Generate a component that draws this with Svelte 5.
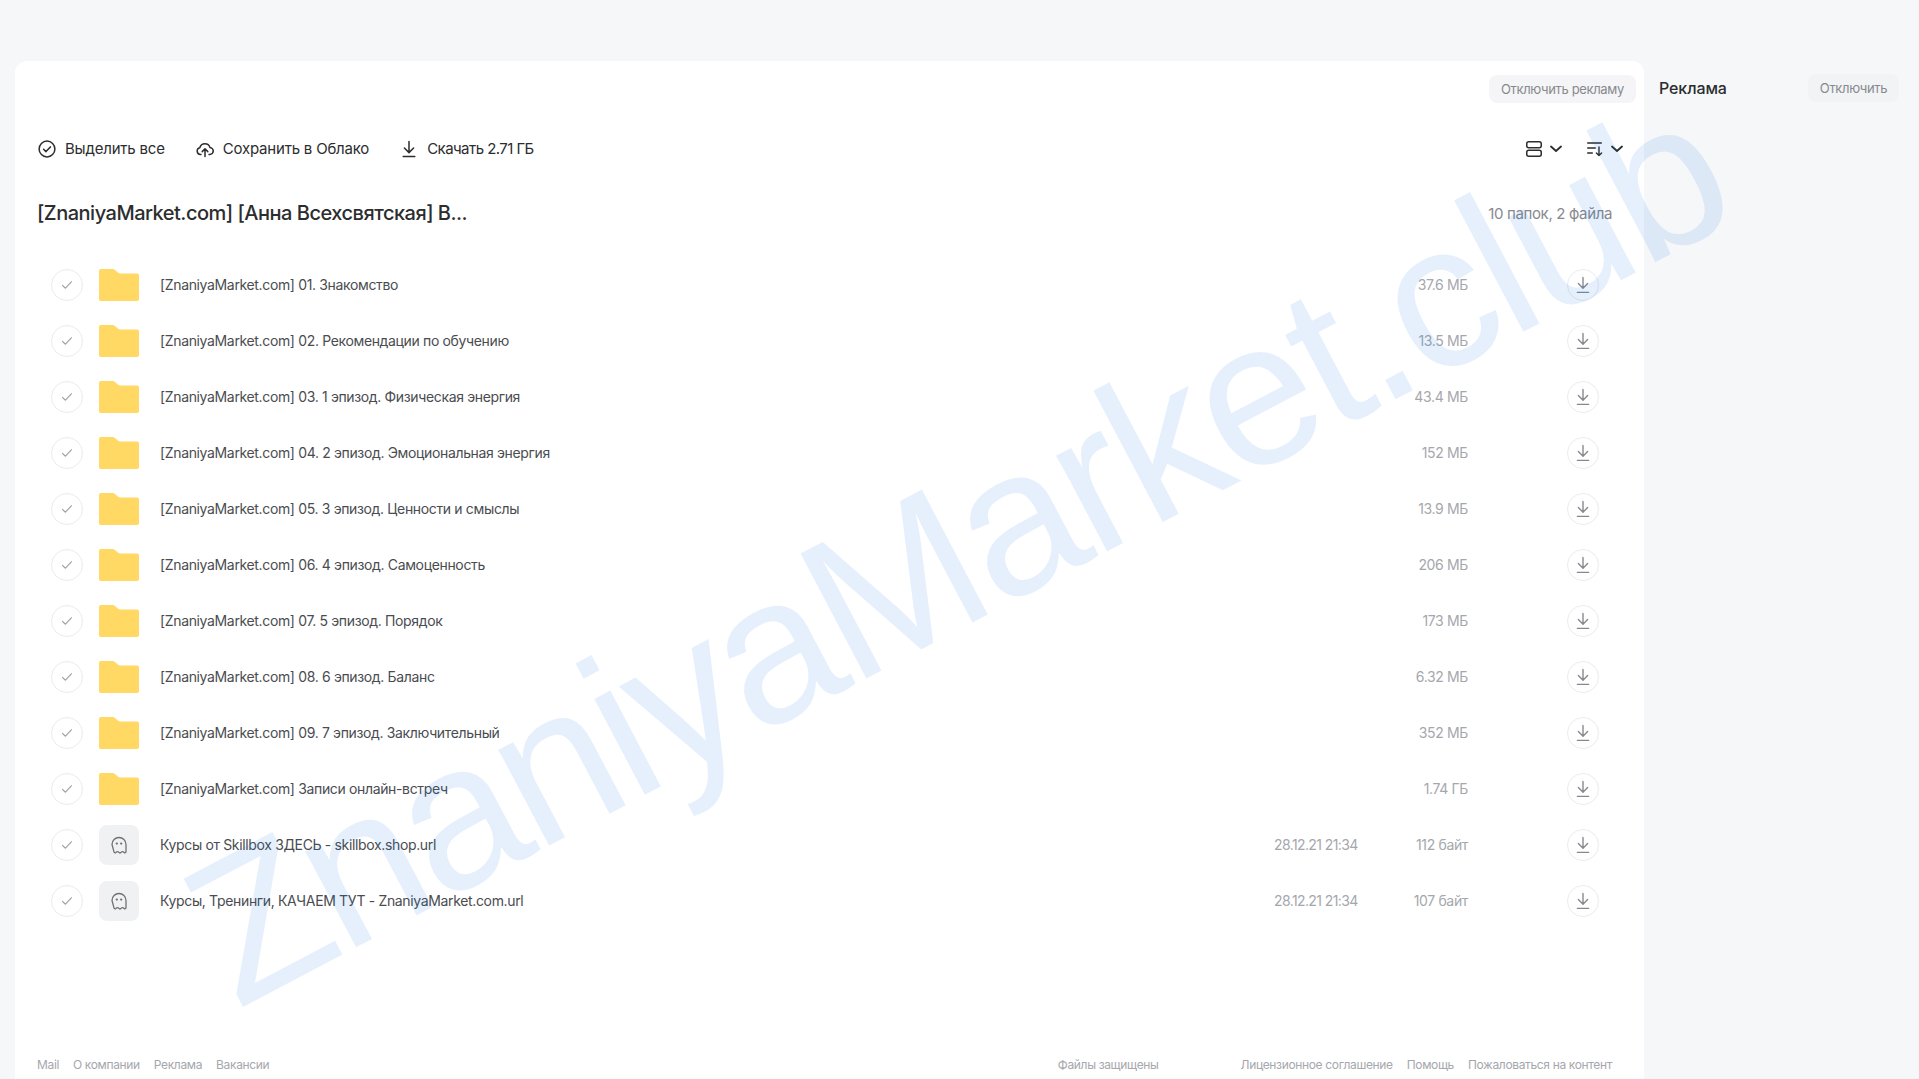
<script lang="ts">
	// Содержимое папки
	const items = [
		{ name: '[ZnaniyaMarket.com] 01. Знакомство', size: '37.6 МБ', type: 'folder' },
		{ name: '[ZnaniyaMarket.com] 02. Рекомендации по обучению', size: '13.5 МБ', type: 'folder' },
		{ name: '[ZnaniyaMarket.com] 03. 1 эпизод. Физическая энергия', size: '43.4 МБ', type: 'folder' },
		{ name: '[ZnaniyaMarket.com] 04. 2 эпизод. Эмоциональная энергия', size: '152 МБ', type: 'folder' },
		{ name: '[ZnaniyaMarket.com] 05. 3 эпизод. Ценности и смыслы', size: '13.9 МБ', type: 'folder' },
		{ name: '[ZnaniyaMarket.com] 06. 4 эпизод. Самоценность', size: '206 МБ', type: 'folder' },
		{ name: '[ZnaniyaMarket.com] 07. 5 эпизод. Порядок', size: '173 МБ', type: 'folder' },
		{ name: '[ZnaniyaMarket.com] 08. 6 эпизод. Баланс', size: '6.32 МБ', type: 'folder' },
		{ name: '[ZnaniyaMarket.com] 09. 7 эпизод. Заключительный', size: '352 МБ', type: 'folder' },
		{ name: '[ZnaniyaMarket.com] Записи онлайн-встреч', size: '1.74 ГБ', type: 'folder' },
		{ name: 'Курсы от Skillbox ЗДЕСЬ - skillbox.shop.url', size: '112 байт', date: '28.12.21 21:34', type: 'file' },
		{ name: 'Курсы, Тренинги, КАЧАЕМ ТУТ - ZnaniyaMarket.com.url', size: '107 байт', date: '28.12.21 21:34', type: 'file' }
	];
</script>

<div class="page">
	<main class="card">
		<div class="promo">
			<button class="promo-btn">Отключить рекламу</button>
		</div>

		<div class="toolbar">
			<div class="actions">
				<button class="action">
					<svg width="18" height="18" viewBox="0 0 18 18" fill="none" stroke="#2c2d2e" stroke-width="1.5">
						<circle cx="9" cy="9" r="7.9" />
						<path d="M5.6 9.2l2.4 2.4 4.4-4.7" stroke-linecap="round" stroke-linejoin="round" />
					</svg>
					Выделить все
				</button>
				<button class="action">
					<svg width="18" height="18" viewBox="0 0 18 18" fill="none" stroke="#2c2d2e" stroke-width="1.5" stroke-linecap="round" stroke-linejoin="round">
						<path d="M5 14.4H4.4A3.4 3.4 0 0 1 3.8 7.7 5.3 5.3 0 0 1 14 7.6a3.4 3.4 0 0 1-.3 6.8H13" />
						<path d="M9 16.5V9M6.2 11.6 9 8.8l2.8 2.8" />
					</svg>
					Сохранить в Облако
				</button>
				<button class="action narrow">
					<svg width="18" height="18" viewBox="0 0 18 18" fill="none" stroke="#2c2d2e" stroke-width="1.5" stroke-linecap="round" stroke-linejoin="round">
						<path d="M9 1.5v11M4.4 8 9 12.6 13.6 8M3.2 16.6h11.6" />
					</svg>
					Скачать 2.71 ГБ
				</button>
			</div>
			<div class="views">
				<button class="view">
					<svg width="16" height="16" viewBox="0 0 16 16" fill="none" stroke="#2c2d2e" stroke-width="1.5">
						<rect x=".75" y=".75" width="14.5" height="6" rx="2" />
						<rect x=".75" y="9.25" width="14.5" height="6" rx="2" />
					</svg>
					<svg width="12" height="8" viewBox="0 0 12 8" fill="none" stroke="#2c2d2e" stroke-width="1.8" stroke-linecap="round" stroke-linejoin="round">
						<path d="M1 1.5 6 6l5-4.5" />
					</svg>
				</button>
				<button class="view">
					<svg width="16" height="16" viewBox="0 0 16 16" fill="none" stroke="#2c2d2e" stroke-width="1.4" stroke-linecap="round" stroke-linejoin="round">
						<path d="M.7 2h13.6M.7 7h7.6M.7 12h4.6M12 6v8.6M9.4 12l2.6 2.6 2.6-2.6" />
					</svg>
					<svg width="12" height="8" viewBox="0 0 12 8" fill="none" stroke="#2c2d2e" stroke-width="1.8" stroke-linecap="round" stroke-linejoin="round">
						<path d="M1 1.5 6 6l5-4.5" />
					</svg>
				</button>
			</div>
		</div>

		<div class="heading">
			<h1>[ZnaniyaMarket.com] [Анна Всехсвятская] В...</h1>
			<span class="count">10 папок, 2 файла</span>
		</div>

		<ul class="list">
			{#each items as item}
				<li class="row">
					<span class="check">
						<svg width="12" height="10" viewBox="0 0 12 10" fill="none" stroke="#a0a2a6" stroke-width="1.2" stroke-linecap="round" stroke-linejoin="round">
							<path d="M1.5 5.4 4.4 8.2l6-6.4" />
						</svg>
					</span>
					{#if item.type === 'folder'}
						<svg class="thumb" width="40" height="32" viewBox="0 0 40 32">
							<path d="M2 0h11.5c1 0 1.7.3 2.4 1l3 2.6c.6.6 1.3.9 2.2.9H38c1.1 0 2 .9 2 2V30c0 1.1-.9 2-2 2H2c-1.1 0-2-.9-2-2V2C0 .9.9 0 2 0z" fill="#ffd964" />
						</svg>
					{:else}
						<span class="thumb file">
							<svg width="18" height="19" viewBox="0 0 18 19" fill="none" stroke="#6f7176" stroke-width="1.3" stroke-linejoin="round">
								<path d="M2 8.5a7 7 0 0 1 14 0v7.3c0 .9-1 1.3-1.7.8l-1.1-.8c-.4-.3-.9-.3-1.3 0l-1 .8c-.5.4-1.3.4-1.8 0l-1-.8c-.4-.3-.9-.3-1.3 0l-1 .8c-.7.5-1.8.1-1.8-.8z" />
								<circle cx="6.8" cy="7.6" r=".5" fill="#6f7176" />
								<circle cx="11.2" cy="7.6" r=".5" fill="#6f7176" />
							</svg>
						</span>
					{/if}
					<span class="name">{item.name}</span>
					<span class="date">{item.date ?? ''}</span>
					<span class="size">{item.size}</span>
					<button class="download" aria-label="Скачать">
						<svg width="16" height="18" viewBox="0 0 16 18" fill="none" stroke="#87898f" stroke-width="1.4" stroke-linecap="round" stroke-linejoin="round">
							<path d="M8 1.5v10.6M3.4 7.6 8 12.2l4.6-4.6M2.4 16.4h11.2" />
						</svg>
					</button>
				</li>
			{/each}
		</ul>

		<footer class="footer">
			<div class="links">
				<span>Mail</span>
				<span>О компании</span>
				<span>Реклама</span>
				<span>Вакансии</span>
			</div>
			<span class="safe">Файлы защищены</span>
			<div class="links">
				<span>Лицензионное соглашение</span>
				<span>Помощь</span>
				<span>Пожаловаться на контент</span>
			</div>
		</footer>
	</main>

	<aside class="side">
		<span class="side-title">Реклама</span>
		<button class="side-btn">Отключить</button>
	</aside>

	<div class="watermark">ZnaniyaMarket.club</div>
</div>

<style>
	:global(body) {
		margin: 0;
		background: #f5f7f9;
	}

	.page {
		position: relative;
		display: flex;
		height: 1079px;
		padding: 61px 0 0 15px;
		box-sizing: border-box;
		overflow: hidden;
		font-family: Inter, 'Noto Sans', sans-serif;
		color: #2c2d2e;
		letter-spacing: -0.35px;
	}

	button {
		font: inherit;
		letter-spacing: inherit;
		border: none;
		background: none;
		padding: 0;
		color: inherit;
	}

	.card {
		display: flex;
		flex-direction: column;
		width: 1629px;
		background: #fff;
		border-radius: 12px 12px 0 0;
		box-sizing: border-box;
		padding: 14px 8px 0 22px;
	}

	.promo {
		display: flex;
		justify-content: flex-end;
		height: 28px;
	}

	.promo-btn {
		width: 147px;
		height: 28px;
		border-radius: 8px;
		background: #f5f5f7;
		color: #87898f;
		font-size: 13px;
	}

	.toolbar {
		display: flex;
		justify-content: space-between;
		align-items: center;
		height: 24px;
		margin-top: 34px;
		padding-right: 13px;
		padding-left: 1px;
	}

	.actions {
		display: flex;
		gap: 31px;
	}

	.action {
		display: flex;
		align-items: center;
		gap: 9px;
		font-size: 15px;
		line-height: 24px;
		letter-spacing: -0.2px;
	}

	.narrow {
		letter-spacing: -0.55px;
	}

	.views {
		display: flex;
		gap: 25px;
	}

	.view {
		display: flex;
		align-items: center;
		gap: 8px;
	}

	.heading {
		display: flex;
		justify-content: space-between;
		align-items: center;
		height: 30px;
		margin-top: 37px;
		padding-right: 24px;
	}

	h1 {
		margin: 0;
		font-size: 20px;
		font-weight: 500;
		letter-spacing: -0.5px;
	}

	.count {
		font-size: 15px;
		color: #87898f;
		white-space: nowrap;
	}

	.list {
		list-style: none;
		margin: 29px 0 0;
		padding: 0;
	}

	.row {
		display: flex;
		align-items: center;
		height: 56px;
		padding-left: 14px;
	}

	.check {
		display: flex;
		align-items: center;
		justify-content: center;
		width: 32px;
		height: 32px;
		border: 1px solid #ebecef;
		border-radius: 50%;
		box-sizing: border-box;
		flex: none;
	}

	.thumb {
		flex: none;
		margin-left: 16px;
	}

	.file {
		display: flex;
		align-items: center;
		justify-content: center;
		width: 40px;
		height: 40px;
		border-radius: 8px;
		background: #f0f1f3;
	}

	.name {
		flex: 1;
		margin-left: 21px;
		padding-bottom: 1px;
		font-size: 14px;
		color: #4a4c50;
	}

	.date {
		width: 83px;
		padding-bottom: 1px;
		font-size: 14px;
		letter-spacing: -0.6px;
		color: #a5a7ad;
		white-space: nowrap;
	}

	.size {
		width: 111px;
		padding-bottom: 1px;
		text-align: right;
		font-size: 14px;
		color: #a5a7ad;
	}

	.download {
		display: flex;
		align-items: center;
		justify-content: center;
		width: 32px;
		height: 32px;
		margin-left: 99px;
		margin-right: 37px;
		border: 1px solid #ebecef;
		border-radius: 50%;
		box-sizing: border-box;
	}

	.footer {
		display: flex;
		align-items: center;
		margin-top: auto;
		height: 28px;
		margin-bottom: 1px;
		font-size: 12px;
		color: #a5a7ad;
		padding-right: 24px;
	}

	.links {
		display: flex;
		gap: 14px;
	}

	.safe {
		margin-left: auto;
		margin-right: 82px;
	}

	.side {
		display: flex;
		justify-content: space-between;
		align-items: center;
		width: 240px;
		height: 28px;
		padding-top: 13px;
		margin-left: 15px;
	}

	.side-title {
		font-size: 16px;
		font-weight: 500;
		letter-spacing: -0.1px;
		color: #2c2d2e;
	}

	.side-btn {
		width: 91px;
		height: 28px;
		border-radius: 8px;
		background: #f2f3f5;
		color: #87898f;
		font-size: 13px;
	}

	/* Водяной знак поверх страницы */
	.watermark {
		position: absolute;
		left: 237px;
		top: 836px;
		font-family: 'Liberation Sans', sans-serif;
		font-size: 205px;
		line-height: 1;
		letter-spacing: -5px;
		white-space: nowrap;
		color: rgba(0, 110, 230, 0.1);
		transform-origin: 0 0.8465em;
		transform: rotate(-27.8deg);
		pointer-events: none;
	}
</style>
